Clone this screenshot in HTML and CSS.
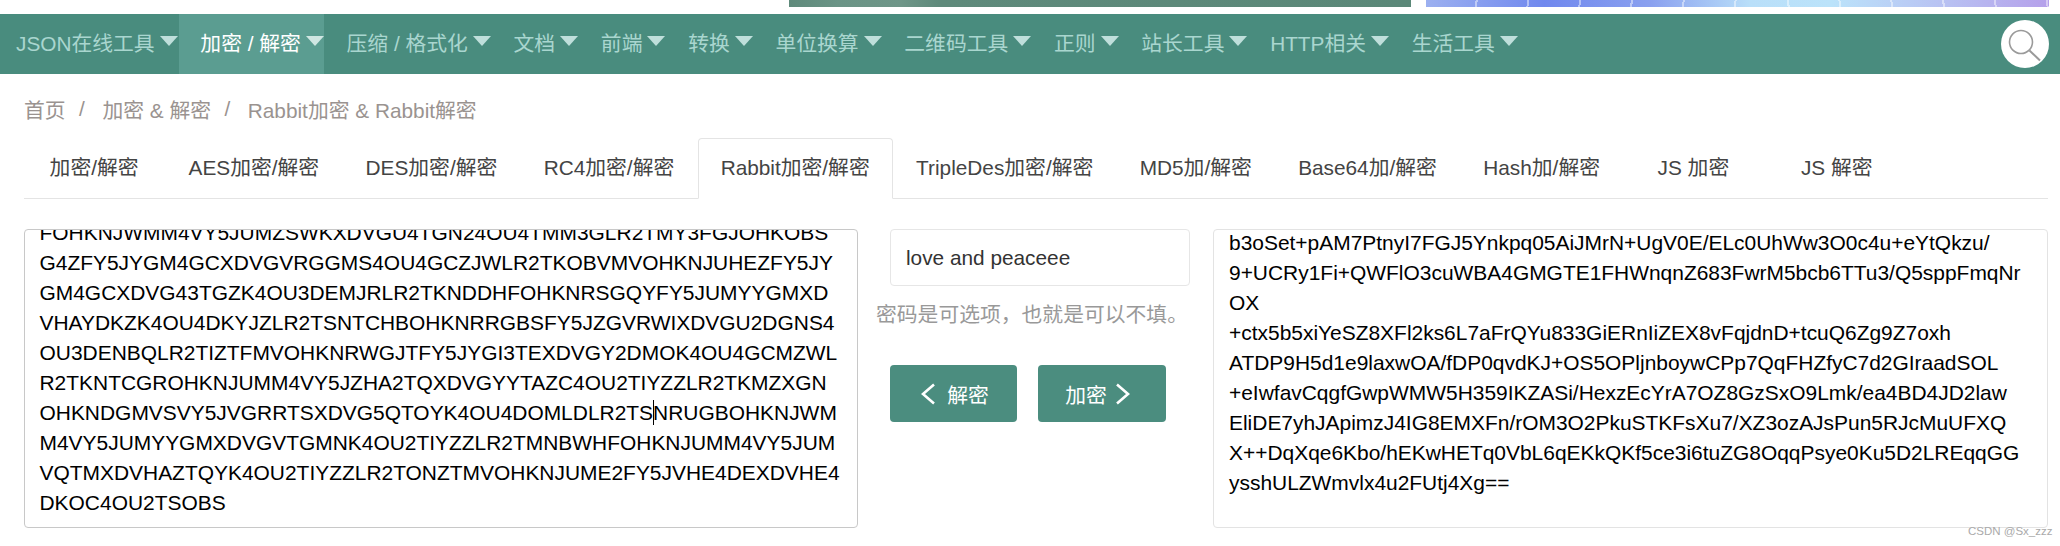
FILE: index.html
```html
<!DOCTYPE html>
<html lang="zh">
<head>
<meta charset="utf-8">
<title>Rabbit加密 &amp; Rabbit解密</title>
<link rel="stylesheet" href="styles.css">
</head>
<body>
<div class="banners">
  <div class="banner banner-green"></div>
  <div class="banner banner-blue"></div>
</div>
<nav class="nav">
  <a class="nav-item nav-first">JSON在线工具<i class="tri"></i></a>
  <a class="nav-item nav-active">加密 / 解密<i class="tri"></i></a>
  <a class="nav-item">压缩 / 格式化<i class="tri"></i></a>
  <a class="nav-item">文档<i class="tri"></i></a>
  <a class="nav-item">前端<i class="tri"></i></a>
  <a class="nav-item">转换<i class="tri"></i></a>
  <a class="nav-item">单位换算<i class="tri"></i></a>
  <a class="nav-item">二维码工具<i class="tri"></i></a>
  <a class="nav-item">正则<i class="tri"></i></a>
  <a class="nav-item">站长工具<i class="tri"></i></a>
  <a class="nav-item">HTTP相关<i class="tri"></i></a>
  <a class="nav-item">生活工具<i class="tri"></i></a>
  <div class="search">
    <svg width="48" height="48" viewBox="0 0 48 48"><circle cx="20" cy="22" r="11.5" fill="none" stroke="#9a9a9a" stroke-width="1.6"/><path d="M28.5 30.5L39 40.5" fill="none" stroke="#9a9a9a" stroke-width="2"/></svg>
  </div>
</nav>
<div class="crumbs">
  <span>首页</span><span class="sep">/</span><span>加密 &amp; 解密</span><span class="sep">/</span><span>Rabbit加密 &amp; Rabbit解密</span>
</div>
<ul class="tabs">
  <li class="tab tab-first">加密/解密</li>
  <li class="tab">AES加密/解密</li>
  <li class="tab">DES加密/解密</li>
  <li class="tab">RC4加密/解密</li>
  <li class="tab tab-active">Rabbit加密/解密</li>
  <li class="tab">TripleDes加密/解密</li>
  <li class="tab">MD5加/解密</li>
  <li class="tab">Base64加/解密</li>
  <li class="tab">Hash加/解密</li>
  <li class="tab tab-wide">JS 加密</li>
  <li class="tab tab-wide">JS 解密</li>
</ul>
<main class="tool">
  <div class="box box-left">
    <div class="scroll">FOHKNJWMM4VY5JUMZSWKXDVGU4TGN24OU4TMM3GLR2TMY3FGJOHKOBS<br>G4ZFY5JYGM4GCXDVGVRGGMS4OU4GCZJWLR2TKOBVMVOHKNJUHEZFY5JY<br>GM4GCXDVG43TGZK4OU3DEMJRLR2TKNDDHFOHKNRSGQYFY5JUMYYGMXD<br>VHAYDKZK4OU4DKYJZLR2TSNTCHBOHKNRRGBSFY5JZGVRWIXDVGU2DGNS4<br>OU3DENBQLR2TIZTFMVOHKNRWGJTFY5JYGI3TEXDVGY2DMOK4OU4GCMZWL<br>R2TKNTCGROHKNJUMM4VY5JZHA2TQXDVGYYTAZC4OU2TIYZZLR2TKMZXGN<br>OHKNDGMVSVY5JVGRRTSXDVG5QTOYK4OU4DOMLDLR2TS<span class="caret"></span>NRUGBOHKNJWM<br>M4VY5JUMYYGMXDVGVTGMNK4OU2TIYZZLR2TMNBWHFOHKNJUMM4VY5JUM<br>VQTMXDVHAZTQYK4OU2TIYZZLR2TONZTMVOHKNJUME2FY5JVHE4DEXDVHE4<br>DKOC4OU2TSOBS</div>
  </div>
  <div class="middle">
    <div class="password">love and peaceee</div>
    <p class="hint">密码是可选项，也就是可以不填。</p>
    <div class="buttons">
      <button class="btn btn-dec"><svg width="17" height="22" viewBox="0 0 17 22"><path d="M16 1.5L5 11l11 9.5" fill="none" stroke="#fff" stroke-width="2.6"/></svg>解密</button>
      <button class="btn btn-enc">加密<svg width="17" height="22" viewBox="0 0 17 22"><path d="M1 1.5L12 11 1 20.5" fill="none" stroke="#fff" stroke-width="2.6"/></svg></button>
    </div>
  </div>
  <div class="box box-right">
    <div class="plain">b3oSet+pAM7PtnyI7FGJ5Ynkpq05AiJMrN+UgV0E/ELc0UhWw3O0c4u+eYtQkzu/<br>9+UCRy1Fi+QWFlO3cuWBA4GMGTE1FHWnqnZ683FwrM5bcb6TTu3/Q5sppFmqNr<br>OX<br>+ctx5b5xiYeSZ8XFl2ks6L7aFrQYu833GiERnIiZEX8vFqjdnD+tcuQ6Zg9Z7oxh<br>ATDP9H5d1e9laxwOA/fDP0qvdKJ+OS5OPljnboywCPp7QqFHZfyC7d2GIraadSOL<br>+eIwfavCqgfGwpWMW5H359IKZASi/HexzEcYrA7OZ8GzSxO9Lmk/ea4BD4JD2law<br>EliDE7yhJApimzJ4IG8EMXFn/rOM3O2PkuSTKFsXu7/XZ3ozAJsPun5RJcMuUFXQ<br>X++DqXqe6Kbo/hEKwHETq0VbL6qEKkQKf5ce3i6tuZG8OqqPsye0Ku5D2LREqqGG<br>ysshULZWmvlx4u2FUtj4Xg==</div>
  </div>
</main>
<div class="watermark">CSDN @Sx_zzz</div>
</body>
</html>
```
FILE: styles.css
```css
* { box-sizing: border-box; }
html, body { margin: 0; padding: 0; }
body {
  position: relative;
  width: 2060px;
  height: 546px;
  overflow: hidden;
  background: #fff;
  font-family: "Liberation Sans", "Noto Sans CJK SC", sans-serif;
  font-size: 20.8px;
  color: #000;
}
.banners { display: flex; gap: 15px; height: 7px; margin-bottom: 7px; padding-left: 789px; }
.banner { height: 7px; }
.banner-green { width: 622px; background: linear-gradient(90deg, #5f8a7b 0, #6b9486 8%, #6f9688 18%, #5f8a7b 24%, #5b8878 100%); }
.banner-blue {
  width: 623px;
  background:
    repeating-linear-gradient(100deg, transparent 0 49px, rgba(255,255,255,.45) 49px 51px) left top / 50% 100% no-repeat,
    repeating-linear-gradient(80deg, transparent 0 49px, rgba(255,255,255,.45) 49px 51px) right top / 50% 100% no-repeat,
    linear-gradient(90deg, #9cb0f0 0, #7088ee 19%, #8aa0ef 36%, #b9dff9 52%, #bbe3fa 65%, #b8c0f2 84%, #b5a0ea 100%);
}
.nav { display: flex; height: 60px; background: #498c7e; position: relative; }
.nav-item { display: block; padding-left: 22.7px; line-height: 60px; color: #a9d6cf; white-space: nowrap; }
.nav-first { padding-left: 16px; padding-right: 1px; }
.nav-active { padding-left: 21.7px; background: #5b9d91; color: #fff; }
.tri {
  display: inline-block;
  width: 0;
  height: 0;
  margin-left: 5px;
  border-left: 9px solid transparent;
  border-right: 9px solid transparent;
  border-top: 10px solid #bfdfdb;
  vertical-align: 5px;
}
.nav-active .tri { border-top-color: #cfe6e2; }
.search {
  position: absolute;
  top: 6px;
  left: 2001px;
  width: 48px;
  height: 48px;
  border-radius: 50%;
  background: #fff;
}
.search svg { display: block; }
.crumbs { display: flex; height: 64px; padding-top: 5px; align-items: center; padding-left: 24px; color: #9a9390; }
.sep { margin: 0 17.5px 0 13.5px; }
.tabs { display: flex; gap: 2.4px; list-style: none; margin: 0 12px 0 24px; padding: 0 0 0 3.6px; height: 61px; border-bottom: 1px solid #e4e4e4; }
.tab { height: 60px; padding: 0 21px; line-height: 58px; color: #444; white-space: nowrap; border: 1px solid transparent; }
.tab-first { padding-right: 24.6px; }
.tab-active { height: 61px; padding: 0 22px; margin: 0 -1px; background: #fff; border-color: #e4e4e4 #e4e4e4 #fff; border-radius: 4px 4px 0 0; }
.tab-wide { width: 138px; padding: 0; text-align: center; }
.tab-wide + .tab-wide { width: 144px; }
.tool { display: grid; grid-template-columns: 834px 355px 835px; margin: 30px 0 0 24px; height: 300px; }
.box { height: 299px; border: 1px solid #e3e3e3; border-radius: 4px; overflow: hidden; font-size: 20.95px; line-height: 30px; color: #000; }
.box-left { padding-left: 14.5px; border-color: #c8c8c8; }
.box-right { padding-left: 15px; }
.scroll { margin-top: -12px; white-space: nowrap; }
.plain { margin-top: -2px; white-space: nowrap; }
.caret { display: inline-block; width: 1px; height: 25px; margin-right: -1px; background: #000; vertical-align: -5px; }
.middle { display: flex; flex-direction: column; align-items: flex-start; padding-left: 32px; }
.password { width: 300px; height: 57px; padding-left: 15px; line-height: 55px; border: 1px solid #e6e6e6; border-radius: 4px; color: #333; }
.hint { margin: 14px 0 35px -14px; height: 30px; line-height: 30px; color: #999; white-space: nowrap; }
.buttons { display: flex; gap: 21px; }
.btn { display: flex; align-items: center; justify-content: center; height: 57px; border: 0; border-radius: 4px; background: #4b8d7f; color: #fff; font: inherit; padding: 0; }
.btn-dec { width: 127px; gap: 12px; }
.btn-enc { width: 128px; gap: 9px; padding-right: 6px; }
.watermark { position: absolute; left: 1968px; top: 524px; font-size: 11.5px; line-height: 14px; color: #aaa; white-space: nowrap; }
```
